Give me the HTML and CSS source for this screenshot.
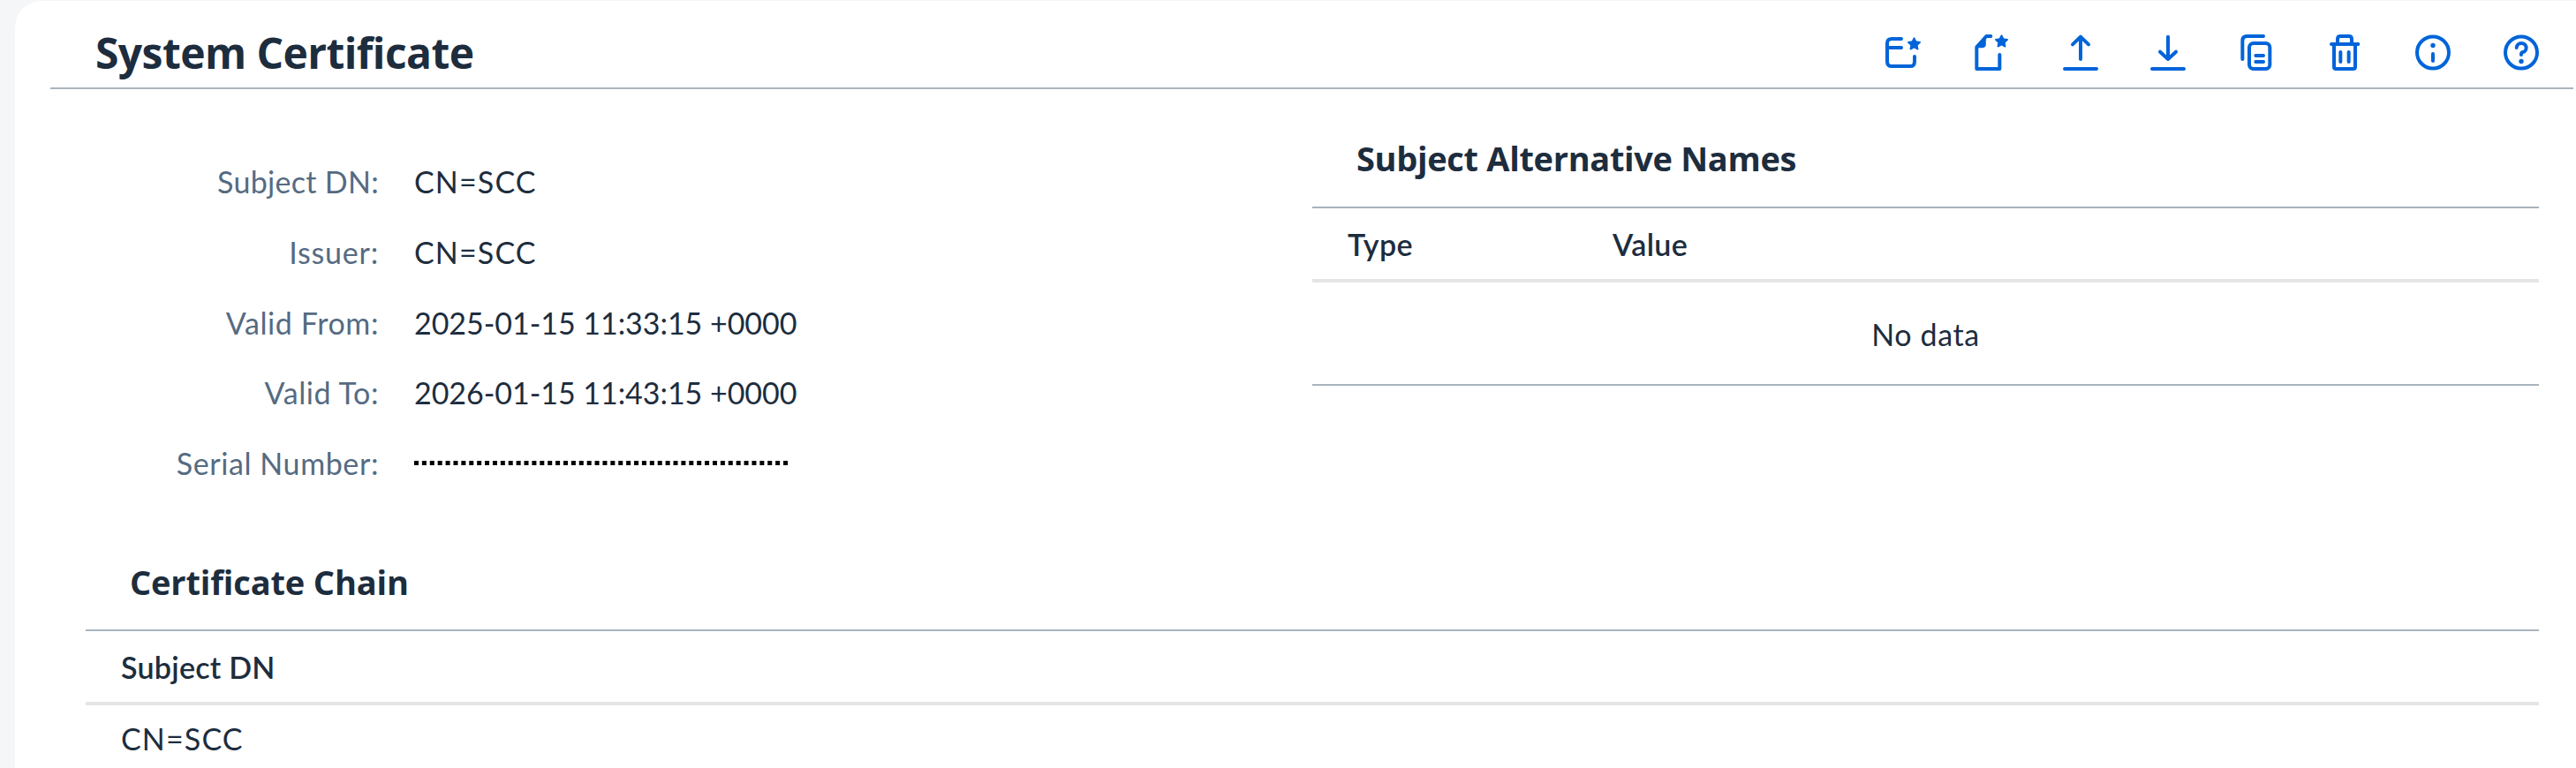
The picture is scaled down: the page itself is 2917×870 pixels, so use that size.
FILE: index.html
```html
<!DOCTYPE html>
<html lang="en">
<head>
<meta charset="utf-8">
<title>System Certificate</title>
<link rel="stylesheet" href="styles.css">
</head>
<body>
<main class="panel">
  <header class="toolbar">
    <h1 class="title"><span class="t-title">System Certificate</span></h1>
    <nav class="actions">
      <button class="action" aria-label="Create certificate"><svg viewBox="0 0 120 123"><path d="M54 15H22Q6 15 6 31V92Q6 108 22 108H84Q99 108 99 92V75M6 45H54"/><path class="solid" d="M97.5 12L103.7 24.5L117.5 26.5L107.5 36.2L109.8 50L97.5 43.5L85.2 50L87.5 36.2L77.5 26.5L91.3 24.5Z"/></svg></button>
      <button class="action" aria-label="Create signing request"><svg viewBox="0 0 120 123"><path d="M88 69V117H10V43L43 6H58"/><path class="solid" d="M39 12V34Q39 43 30 43H12Z"/><path class="solid" d="M94.500 3L100.700 15.500L114.500 17.500L104.500 27.200L106.800 41L94.500 34.500L82.200 41L84.500 27.200L74.500 17.500L88.300 15.500Z"/></svg></button>
      <button class="action" aria-label="Upload"><svg viewBox="0 0 120 123"><path d="M63 84V8M36 34L63 8L90 34M9 117H117"/></svg></button>
      <button class="action" aria-label="Download"><svg viewBox="0 0 120 123"><path d="M60 8V84M33 59L60 84L87 59M6 117H114"/></svg></button>
      <button class="action" aria-label="Copy"><svg viewBox="0 0 120 123"><path d="M13 84V22Q13 6 29 6H84M58 72H84M58 93H84"/><rect x="36" y="30" width="70" height="87" rx="14"/></svg></button>
      <button class="action" aria-label="Delete"><svg viewBox="0 0 120 123"><path d="M15 33H106M36 33V16Q36 6 46 6H74Q84 6 84 16V33M24 33V110Q24 117 31 117H89Q96 117 96 110V33M46 60V93M74 60V93"/></svg></button>
      <button class="action" aria-label="Information"><svg viewBox="0 0 120 123"><circle cx="60" cy="61.500" r="54"/><path d="M60 66V90"/><circle class="dot" cx="60" cy="37.500" r="8"/></svg></button>
      <button class="action" aria-label="Help"><svg viewBox="0 0 120 123"><circle cx="60" cy="61.500" r="54"/><path d="M44 45A16.500 15.500 0 1 1 63 61Q60 62 60 69"/><circle class="dot" cx="60" cy="91.500" r="8"/></svg></button>
    </nav>
  </header>

  <div class="columns">
    <dl class="fields">
      <dt><span class="l-subject">Subject DN:</span></dt><dd><span class="v-cn">CN=SCC</span></dd>
      <dt><span class="l-issuer">Issuer:</span></dt><dd><span class="v-cn">CN=SCC</span></dd>
      <dt><span class="l-from">Valid From:</span></dt><dd><span class="v-date">2025-01-15 11:33:15 +0000</span></dd>
      <dt><span class="l-to">Valid To:</span></dt><dd><span class="v-date">2026-01-15 11:43:15 +0000</span></dd>
      <dt><span class="l-serial">Serial Number:</span></dt><dd><svg class="masked" viewBox="0 0 424 5"><path d="M0 2.500H424"/></svg></dd>
    </dl>
    <section class="names">
      <h2 class="heading"><span class="t-names">Subject Alternative Names</span></h2>
      <div class="row head"><span class="cell-type"><span class="c-type">Type</span></span><span class="c-value">Value</span></div>
      <div class="row empty"><span class="c-empty">No data</span></div>
    </section>
  </div>

  <section class="chain">
    <h2 class="heading"><span class="t-chain">Certificate Chain</span></h2>
    <div class="row head"><span class="c-subject">Subject DN</span></div>
    <div class="row"><span class="v-cn">CN=SCC</span></div>
  </section>
</main>
</body>
</html>
```
FILE: styles.css
```css
* { box-sizing: border-box; }
html, body { margin: 0; height: 100%; overflow: hidden; }
body {
  padding: 1px 0 0 17px;
  background: #f5f6f7;
  color: #1d2d3e;
  font: 34px/40px Lato, "Noto Sans", sans-serif;
  font-variant-ligatures: none;
}
.panel { height: 869px; background: #fff; border-top-left-radius: 30px; overflow: hidden; }
.toolbar {
  display: flex;
  justify-content: space-between;
  height: 100px;
  margin: 0 3px 0 40px;
  padding: 0 39px 0 51px;
  border-bottom: 2px solid #a8b3bd;
}
.title { margin: 0; padding-top: 29px; font: 700 48px/60px "Open Sans", "Noto Sans", sans-serif; }
.actions { display: flex; gap: 60px; padding-top: 38px; }
.action { width: 40px; height: 41px; padding: 0; border: 0; background: none; }
.action svg {
  display: block; width: 40px; height: 41px; overflow: visible;
  fill: none; stroke: #0064d9; stroke-width: 12; stroke-linecap: round; stroke-linejoin: round;
}
.action .solid { fill: #0064d9; stroke-width: 5; }
.action .dot { fill: #0064d9; stroke: none; }

.columns { display: grid; grid-template-columns: 1389px 1389px; padding-left: 80px; height: 506px; }
.fields {
  display: grid;
  grid-template-columns: 332px 1fr;
  grid-auto-rows: 79.8px;
  column-gap: 40px;
  align-content: start;
  margin: 0;
  padding-top: 65px;
}
.fields dt, .fields dd { margin: 0; line-height: 80px; white-space: nowrap; }
.fields dt { color: #556b82; text-align: right; }
.fields dd { display: flex; }
.masked { width: 424px; height: 5px; margin-top: 37px; }
.masked path { stroke: #000; stroke-width: 5; stroke-dasharray: 5 3.894; }

.heading { margin: 0; padding-left: 50px; font: 700 38px "Open Sans", "Noto Sans", sans-serif; }
.row { display: flex; padding-left: 40px; }
.row.head { height: 86px; line-height: 82px; border-top: 2px solid #a8b3bd; border-bottom: 4px solid #e5e5e5; font-weight: 600; }
.names .heading { height: 133px; padding-top: 28px; line-height: 100px; }
.row.empty { justify-content: center; height: 117px; padding: 0; line-height: 117px; border-bottom: 2px solid #a8b3bd; }
.cell-type { width: 300px; }
.chain { width: 2778px; margin-left: 80px; }
.chain .heading { height: 106px; line-height: 104px; }
.chain .row:last-child { line-height: 76px; }

/* Tracking per text style */
.t-title { letter-spacing: -.57px; }
.t-names { letter-spacing: -.33px; }
.t-chain { letter-spacing: -.15px; }
.l-subject { letter-spacing: .3px; }
.l-issuer { letter-spacing: .8px; }
.l-from, .l-to, .l-serial { letter-spacing: .6px; }
.v-cn { letter-spacing: 1.150px; }
.v-date { letter-spacing: -.04px; }
.c-type, .c-value { letter-spacing: .4px; }
.c-empty { letter-spacing: .6px; }
.c-subject { letter-spacing: .25px; }
```
